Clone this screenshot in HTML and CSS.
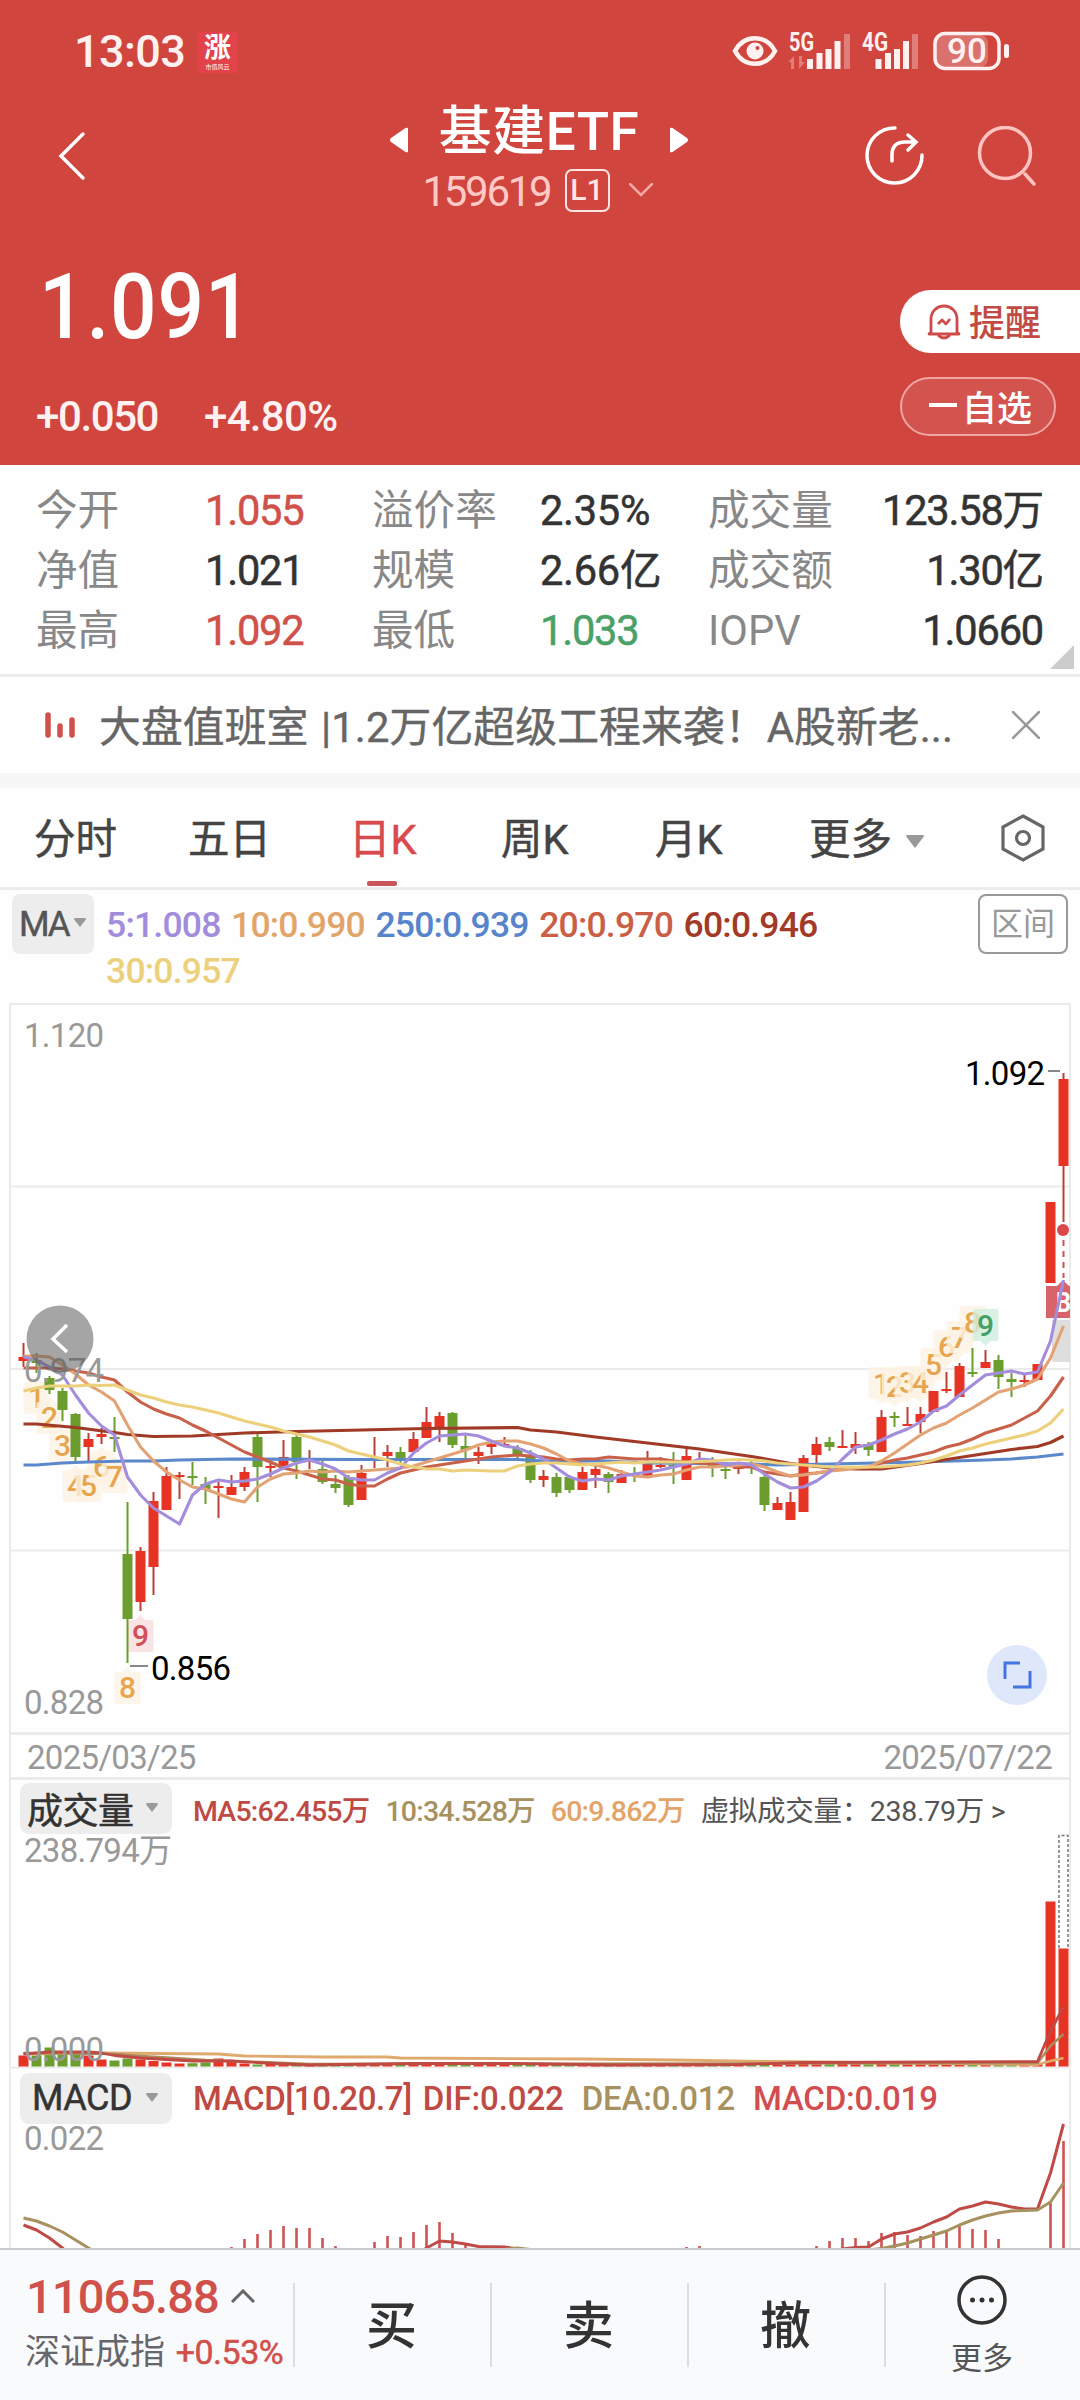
FILE: index.html
```html
<!DOCTYPE html>
<html lang="zh-CN">
<head>
  <meta charset="UTF-8">
  <meta name="viewport" content="width=device-width, initial-scale=1.0">
  <title>基建ETF 159619</title>
  <link rel="stylesheet" href="styles.css">
</head>

<body>

  <header>
    <div class="status">
      <span class="time">13:03</span>
      <span class="app-badge"><b>涨</b><i>市值风云</i></span>
      <div class="status-icons">
        <svg width="46" height="32" viewBox="0 0 46 32">
          <path d="M3 16C12-1 34-1 43 16C34 33 12 33 3 16Z" fill="none" stroke="#fff1f0" stroke-width="4.5"/>
          <circle cx="23" cy="16" r="8.5" fill="#fff1f0"/>
          <circle cx="25.500" cy="13" r="2" fill="#d0453e"/>
        </svg>
        <svg class="signal" width="64" height="40" viewBox="0 0 64 40">
          <text x="1" y="20" textLength="25" lengthAdjust="spacingAndGlyphs">5G</text>
          <path class="dim" d="M0 31l6-6v13H3v-7zM17 31l-6 7V25h3v6zM56 3h6v35h-6z"/>
          <path d="M19 28h6v10h-6zM28.500 22h6v16h-6zM37.500 18h6v20h-6zM46.500 10h6v28h-6z"/>
        </svg>
        <svg class="signal" width="58" height="40" viewBox="0 0 58 40">
          <text x="0" y="20" textLength="26" lengthAdjust="spacingAndGlyphs">4G</text>
          <path class="dim" d="M50 3h6v35h-6z"/>
          <path d="M13.500 28h6v10h-6zM23 22h6v16h-6zM32 18h6v20h-6zM41 10h6v28h-6z"/>
        </svg>
        <svg class="battery" width="77" height="40" viewBox="0 0 77 40">
          <rect x="3" y="4" width="52" height="32" rx="8" fill="#db716c"/>
          <rect x="2" y="2.500" width="64" height="35" rx="10" fill="none" stroke="#fff1f0" stroke-width="3.500"/>
          <rect x="71" y="13" width="5" height="14" rx="2.500" fill="#fff1f0"/>
          <text x="14" y="32" textLength="40">90</text>
        </svg>
      </div>
    </div>

    <nav>
      <svg class="back" width="30" height="52" viewBox="0 0 30 52">
        <path d="M26 4L4 26L26 48"/>
      </svg>
      <div class="title">
        <div class="title-row">
          <svg width="18" height="26" viewBox="0 0 18 26"><path d="M18 1v24Q16 26 14 24L1 15Q-1 13 1 11L14 2Q16 0 18 1Z"/></svg>
          <h1>基建ETF</h1>
          <svg width="18" height="26" viewBox="0 0 18 26"><path d="M0 1v24Q2 26 4 24L17 15Q19 13 17 11L4 2Q2 0 0 1Z"/></svg>
        </div>
        <div class="code-row">
          <span>159619</span>
          <em>L1</em>
          <svg width="24" height="14" viewBox="0 0 24 14"><path d="M1 1l11 11L23 1"/></svg>
        </div>
      </div>
      <div class="nav-right">
        <svg width="60" height="60" viewBox="0 0 60 60">
          <path d="M31 2A27.500 27.500 0 1 0 58 29" />
          <path d="M28 35V29Q28 16 41 16H52M44 9l8 7l-8 8"/>
        </svg>
        <svg class="search" width="60" height="60" viewBox="0 0 60 60">
          <circle cx="28" cy="27" r="25.500"/>
          <path d="M48 48l9 10"/>
        </svg>
      </div>
    </nav>

    <div class="quote">
      <div>
        <div class="price">1.091</div>
        <div class="change"><span>+0.050</span><span>+4.80%</span></div>
      </div>
      <div class="quote-buttons">
        <button class="remind">
          <svg width="34" height="36" viewBox="0 0 34 36">
            <path d="M4 28V15A13 13 0 0 1 30 15V28L32 30H2ZM11 31Q17 37 23 31M11 20l4-4l4 4l4-5"/>
          </svg>提醒
        </button>
        <button class="fav"><i></i>自选</button>
      </div>
    </div>
  </header>

  <section class="stats">
    <span>今开</span><b class="up">1.055</b><span>溢价率</span><b class="wide">2.35%</b><span>成交量</span><b>123.58万</b>
    <span>净值</span><b>1.021</b><span>规模</span><b class="wide">2.66亿</b><span>成交额</span><b>1.30亿</b>
    <span>最高</span><b class="up">1.092</b><span>最低</span><b class="down">1.033</b><span>IOPV</span><b>1.0660</b>
  </section>

  <section class="news">
    <svg width="32" height="26" viewBox="0 0 32 26"><path d="M4 3v20M16 14v9M28 8v15"/></svg>
    <p>大盘值班室 |1.2万亿超级工程来袭！A股新老...</p>
    <svg class="close" width="28" height="28" viewBox="0 0 28 28"><path d="M1 1l26 26M27 1L1 27"/></svg>
  </section>

  <section class="tabs">
    <a>分时</a>
    <a>五日</a>
    <a class="active">日K</a>
    <a>周K</a>
    <a>月K</a>
    <a>更多<i class="caret"></i></a>
    <svg width="44" height="48" viewBox="0 0 44 48">
      <path d="M22 2L42 13V35L22 46L2 35V13Z"/>
      <circle cx="22" cy="24" r="6.500"/>
    </svg>
  </section>

  <section class="ma">
    <span class="ma-badge">MA<i class="caret"></i></span>
    <div class="ma-list">
      <span class="c5">5:1.008</span>
      <span class="c10">10:0.990</span>
      <span class="c250">250:0.939</span>
      <span class="c20">20:0.970</span>
      <span class="c60">60:0.946</span>
      <span class="c30">30:0.957</span>
    </div>
    <span class="range">区间</span>
  </section>

  <svg id="kline" width="1080" height="729" viewBox="0 1003 1080 729"></svg>

  <div class="dates"><span>2025/03/25</span><span>2025/07/22</span></div>

  <section class="panel">
    <div class="panel-head volume-head">
      <span class="panel-badge">成交量<i class="caret"></i></span>
      <span class="dif">MA5:62.455万</span>
      <span class="dea">10:34.528万</span>
      <span class="c10">60:9.862万</span>
      <span class="virtual">虚拟成交量：238.79万 &gt;</span>
    </div>
    <svg id="volume" width="1080" height="234" viewBox="0 1835 1080 234"></svg>
  </section>

  <section class="panel">
    <div class="panel-head macd-head">
      <span class="panel-badge">MACD<i class="caret"></i></span>
      <span class="dif">MACD[10.20.7]</span>
      <span class="dif">DIF:0.022</span>
      <span class="dea">DEA:0.012</span>
      <span class="hist">MACD:0.019</span>
    </div>
    <svg id="macd" width="1080" height="125" viewBox="0 2123 1080 125"></svg>
  </section>

  <footer>
    <div class="index">
      <div class="index-value">11065.88<svg width="24" height="14" viewBox="0 0 24 14"><path d="M1 13L12 2l11 11"/></svg></div>
      <div class="index-name">深证成指 <b>+0.53%</b></div>
    </div>
    <a>买</a>
    <a>卖</a>
    <a>撤</a>
    <a class="more">
      <svg width="50" height="50" viewBox="0 0 50 50">
        <circle cx="25" cy="25" r="23" fill="none" stroke="#333" stroke-width="3.500"/>
        <circle cx="15.500" cy="25" r="2.500"/><circle cx="25" cy="25" r="2.500"/><circle cx="34.500" cy="25" r="2.500"/>
      </svg>
      更多
    </a>
  </footer>

  <script src="chart.js"></script>
</body>
</html>
```
FILE: styles.css
```css
* {
  box-sizing: border-box;
}

body {
  margin: 0;
  width: 1080px;
  height: 2400px;
  overflow: hidden;
  background-color: #fefefe;
  color: #333;
  font-family: Roboto, "Noto Sans CJK SC", sans-serif;
}

svg {
  display: block;
  flex: none;
}

i, em {
  font-style: normal;
}

/* header */
header {
  height: 465px;
  background-color: #d0453e;
  color: white;
}

.status {
  display: flex;
  align-items: center;
  height: 102px;
  padding: 0 70px 0 74px;
}

.time {
  width: 123px;
  font-size: 45px;
  font-weight: 500;
  letter-spacing: -0.6px;
  color: #fff1f0;
}

.app-badge {
  width: 41px;
  height: 41px;
  margin-top: 2px;
  background-color: #e2434a;
  text-align: center;
}

.app-badge b {
  display: block;
  font-size: 27px;
  line-height: 32px;
}

.app-badge i {
  display: block;
  font-size: 6px;
  line-height: 6px;
}

.status-icons {
  display: flex;
  align-items: center;
  margin-left: auto;
}

.status-icons svg:first-child {
  margin-right: 10px;
}

.signal {
  overflow: visible;
  margin-right: 10px;
  fill: #fff1f0;
}

.signal + .signal {
  margin-right: 13px;
}

.signal .dim {
  fill: #e07f7a;
}

.signal text {
  font-size: 25px;
  font-weight: 700;
}

.battery text {
  font-size: 35px;
  font-weight: 500;
  fill: #fff1f0;
}

nav {
  display: flex;
  height: 118px;
  padding-left: 57px;
}

nav path, nav circle {
  fill: none;
  stroke: white;
  stroke-width: 3.5;
  stroke-linecap: round;
}

.back {
  margin-top: 28px;
}

.title {
  width: 300px;
  margin-left: 302px;
}

.title-row {
  display: flex;
  align-items: center;
  justify-content: center;
  gap: 31px;
  height: 58px;
}

.title-row svg {
  margin-top: 17px;
}

.title-row path {
  fill: white;
  stroke: none;
}

h1 {
  margin: 2px 0 0;
  font-size: 53px;
  font-weight: 500;
  line-height: 58px;
  letter-spacing: 0.5px;
  white-space: nowrap;
}

.code-row {
  display: flex;
  align-items: center;
  justify-content: center;
  height: 60px;
  margin-left: -3px;
  color: #ffc9c6;
  font-size: 42px;
}

.code-row span {
  width: 142px;
  padding-top: 2px;
  letter-spacing: -2.3px;
}

.code-row em {
  width: 45px;
  height: 43px;
  margin-right: 19px;
  border: 2.5px solid #ffe4e2;
  border-radius: 7px;
  font-size: 30px;
  font-weight: 500;
  line-height: 38px;
  text-align: center;
  color: #ffe4e2;
}

.code-row path {
  stroke: #f3a9a5;
  stroke-width: 2.5;
}

.nav-right {
  display: flex;
  gap: 53px;
  margin-left: auto;
  padding: 24px 43px 0 0;
}

.search circle, .search path {
  stroke: #ffc4c1;
}

.quote {
  display: flex;
  justify-content: space-between;
}

.price {
  height: 120px;
  margin: 24px 0 0 39px;
  font-size: 91px;
  font-weight: 500;
  line-height: 126px;
  letter-spacing: 1px;
  transform: scaleX(0.9);
  transform-origin: left;
}

.change {
  display: flex;
  gap: 46px;
  margin-left: 36px;
  padding-top: 26px;
  font-size: 42px;
  font-weight: 500;
  line-height: 54px;
  letter-spacing: -1.4px;
  color: #fff1f0;
}

.change span + span {
  letter-spacing: -0.7px;
}

.quote-buttons {
  width: 180px;
  padding-top: 70px;
}

button {
  display: flex;
  align-items: center;
  border: 0;
  padding: 0 0 0 27px;
  font-family: inherit;
  font-size: 36px;
}

.remind {
  width: 180px;
  height: 63px;
  padding-bottom: 4px;
  border-radius: 31px 0 0 31px;
  background-color: white;
  color: #c24a44;
  font-weight: 500;
  gap: 8px;
}

.remind svg {
  margin-top: 4px;
}

.remind path {
  fill: none;
  stroke: #cf4b4a;
  stroke-width: 2.8;
  stroke-linejoin: round;
}

.fav {
  width: 156px;
  height: 59px;
  margin-top: 24px;
  padding-bottom: 3px;
  border: 2px solid #f0a6a2;
  border-radius: 30px;
  background-color: #d3544f;
  color: white;
  font-weight: 500;
  font-size: 35px;
}

.fav i {
  width: 28px;
  height: 4px;
  margin-right: 5px;
  background-color: white;
}

/* key figures */
.stats {
  position: relative;
  display: grid;
  grid-template-columns: 169px 167px 168px 168px 1fr auto;
  grid-auto-rows: 60px;
  height: 212px;
  padding: 16px 37px 0 36px;
  border-bottom: 3px solid #ececec;
  font-size: 41.6px;
  line-height: 60px;
}

.stats::after {
  content: "";
  position: absolute;
  right: 6px;
  bottom: 5px;
  border-left: 24px solid transparent;
  border-bottom: 24px solid #ccc;
}

.stats span {
  color: #888;
}

.stats b {
  font-weight: 400;
  letter-spacing: -1.2px;
  -webkit-text-stroke: 0.5px;
}

.stats .wide {
  letter-spacing: -0.3px;
}

.stats b:nth-child(6n) {
  text-align: right;
}

.stats .up {
  color: #d0504a;
}

.stats .down {
  color: #4aa168;
}

.news {
  display: flex;
  align-items: center;
  height: 96px;
  padding: 0 40px 0 44px;
}

.news p {
  margin: -2px auto 0 23px;
  color: #666;
  font-size: 41.8px;
  letter-spacing: 0.1px;
  word-spacing: 2px;
  -webkit-text-stroke: 0.4px;
}

.news path {
  stroke: #d0504a;
  stroke-width: 5.5;
  stroke-linecap: round;
}

.news .close path {
  stroke: #999;
  stroke-width: 2.5;
}

.tabs {
  display: flex;
  align-items: center;
  height: 117px;
  padding-left: 34px;
  border-top: 15px solid #f7f7f7;
  border-bottom: 3px solid #ececec;
  font-size: 41.5px;
  color: #444;
}

.tabs a {
  position: relative;
  top: -2px;
  width: 154px;
  white-space: nowrap;
  -webkit-text-stroke: 0.5px;
}

.tabs a:nth-child(3) { left: -3px; }
.tabs a:nth-child(2) { width: 164px; }
.tabs a:nth-child(3) { width: 149px; }
.tabs a:nth-child(6) { width: 192px; }

.tabs .active {
  color: #d84a4e;
}

.tabs .active::after {
  content: "";
  position: absolute;
  left: 18px;
  bottom: -20px;
  width: 30px;
  height: 5px;
  border-radius: 2px;
  background-color: #c9555a;
}

.tabs circle, .tabs path {
  fill: none;
  stroke: #666;
  stroke-width: 3.2;
}

.caret {
  display: inline-block;
  border: 10px solid transparent;
  border-top: 13px solid #999;
  border-bottom: 0;
  border-radius: 3px;
  margin-left: 13px;
  vertical-align: 6px;
}

/* moving averages */
.ma {
  display: flex;
  height: 113px;
  padding: 4px 12px 0 12px;
}

.ma-badge {
  width: 82px;
  height: 60px;
  padding-left: 7px;
  border-radius: 8px;
  background-color: #ededed;
  color: #555;
  font-size: 35px;
  line-height: 62px;
  letter-spacing: -2px;
  white-space: nowrap;
  -webkit-text-stroke: 0.5px;
}

.ma .caret {
  border-width: 9px 7px 0;
  margin-left: 4px;
  vertical-align: 9px;
}

.ma-list {
  display: flex;
  flex-wrap: wrap;
  column-gap: 10.5px;
  width: 730px;
  height: 92px;
  margin: 8px auto 0 12px;
  font-size: 35.5px;
  font-weight: 500;
  line-height: 46px;
  letter-spacing: -0.8px;
}

.c5 { color: #a28cdc; }
.c10 { color: #e3a469; }
.c250 { color: #5784cb; }
.c20 { color: #cb5f45; }
.c60 { color: #a23a27; }
.c30 { color: #ecd07c; }

.range {
  width: 90px;
  height: 60px;
  border: 2.5px solid #999;
  border-radius: 8px;
  color: #999;
  font-size: 32px;
  line-height: 56px;
  text-align: center;
}

/* charts */
.grid {
  stroke: #ebebeb;
  stroke-width: 2;
  fill: none;
}

.axis {
  font-size: 33px;
  fill: #999;
}

.mark {
  font-size: 33px;
  fill: #000;
}

.flag {
  font-size: 30px;
  font-weight: 500;
  text-anchor: middle;
}

.dates {
  display: flex;
  justify-content: space-between;
  height: 48px;
  margin: 0 9px;
  padding: 0 17px 0 16px;
  border: 2px solid #ebebeb;
  border-top-width: 3px;
  border-bottom-width: 3px;
  color: #999;
  font-size: 33px;
  line-height: 45px;
  letter-spacing: -0.7px;
}

#volume, #macd {
  overflow: visible;
}

.panel-head {
  display: flex;
  align-items: center;
  height: 55px;
  margin: 0 9px;
  padding: 2px 0 0 9px;
  border: solid #ebebeb;
  border-width: 0 2px;
  font-weight: 500;
}

.panel-badge {
  display: flex;
  align-items: center;
  justify-content: space-between;
  width: 152px;
  height: 51px;
  margin-right: 21px;
  padding: 0 13px 2px 7px;
  border-radius: 9px;
  background-color: #ededed;
  color: #333;
  font-size: 36px;
  font-weight: 400;
  letter-spacing: -0.5px;
  -webkit-text-stroke: 0.5px;
}

.panel-badge .caret {
  margin: 0;
  border-width: 9px 7px 0;
}

.volume-head {
  font-size: 28.5px;
  letter-spacing: -0.8px;
}

.volume-head > span + span {
  margin-right: 16px;
}

.volume-head .virtual {
  margin: 0;
  font-weight: 400;
  letter-spacing: -0.3px;
  color: #555;
  white-space: nowrap;
}

.macd-head {
  height: 54px;
  padding-top: 5px;
  font-size: 33px;
  letter-spacing: -0.4px;
}

.macd-head .panel-badge {
  padding-left: 12px;
}

.macd-head .dif {
  margin-right: 11px;
}

.macd-head .dif + .dif,
.macd-head .dea {
  margin-right: 18px;
}

.macd-head .dif + .dif {
  letter-spacing: -0.1px;
}

.macd-head .dea,
.macd-head .hist {
  letter-spacing: -0.2px;
}

.dif { color: #bf4a44; }
.dea { color: #a6915f; }
.hist { color: #d24d50; }

/* bottom bar */
footer {
  position: relative;
  display: flex;
  height: 152px;
  border-top: 2px solid #ccc;
  background-color: #f9fafc;
}

.index {
  width: 293px;
  padding: 17px 0 0 26px;
  white-space: nowrap;
}

.index-value {
  display: flex;
  align-items: center;
  height: 58px;
  font-size: 47px;
  font-weight: 500;
  letter-spacing: -0.9px;
  color: #d0504a;
}

.index-value svg {
  margin-left: 12px;
}

.index-value path {
  fill: none;
  stroke: #666;
  stroke-width: 3;
}

.index-name {
  height: 50px;
  margin-left: -1px;
  padding-top: 2px;
  font-size: 35px;
  line-height: 50px;
  color: #66666c;
}

.index-name b {
  margin-left: 2px;
  font-size: 34px;
  font-weight: 400;
  letter-spacing: -0.5px;
  color: #d0504a;
  -webkit-text-stroke: 0.5px;
}

footer a {
  position: relative;
  width: 197px;
  font-size: 51px;
  font-weight: 500;
  line-height: 154px;
  text-align: center;
}

footer a::before {
  content: "";
  position: absolute;
  left: 0;
  top: 33px;
  height: 84px;
  border-left: 2px solid #dcdde1;
}

footer .more {
  width: 196px;
  font-size: 31px;
  font-weight: 400;
  line-height: 60px;
  color: #555;
}

.more svg {
  margin: 25px auto 4px;
  fill: #333;
}
```
FILE: chart.js
```javascript
const RED = "#e73323";
const GREEN = "#6b9e2f";
const x = i => 23.5 + 13 * i;

// direction, high, body top, body bottom, low
const candles = [
  ["r", 1343, 1357, 1361, 1367], ["g", 1353, 1360, 1363, 1373], ["g", 1376, 1378, 1390, 1394],
  ["g", 1388, 1391, 1410, 1421], ["g", 1413, 1414, 1457, 1461], ["r", 1433, 1439, 1447, 1461],
  ["r", 1428, 1434, 1437, 1444], ["g", 1417, 1437, 1439, 1452], ["g", 1502, 1554, 1619, 1663],
  ["r", 1547, 1551, 1602, 1611], ["r", 1492, 1501, 1567, 1595], ["r", 1467, 1476, 1510, 1510],
  ["r", 1472, 1475, 1477, 1499], ["g", 1462, 1476, 1478, 1485], ["g", 1477, 1484, 1489, 1504],
  ["r", 1482, 1486, 1488, 1518], ["r", 1475, 1487, 1495, 1495], ["r", 1467, 1472, 1487, 1491],
  ["g", 1434, 1437, 1467, 1502], ["r", 1462, 1466, 1468, 1477], ["r", 1440, 1457, 1467, 1468],
  ["g", 1435, 1437, 1462, 1479], ["r", 1450, 1460, 1462, 1469], ["g", 1461, 1469, 1482, 1484],
  ["g", 1475, 1484, 1488, 1493], ["g", 1475, 1477, 1505, 1507], ["r", 1465, 1473, 1500, 1500],
  ["r", 1437, 1458, 1460, 1468], ["r", 1445, 1452, 1456, 1467], ["g", 1447, 1452, 1459, 1463],
  ["r", 1432, 1439, 1452, 1452], ["r", 1407, 1422, 1438, 1438], ["r", 1412, 1416, 1427, 1442],
  ["g", 1412, 1413, 1445, 1448], ["g", 1435, 1446, 1450, 1458], ["r", 1447, 1452, 1456, 1464],
  ["r", 1443, 1444, 1447, 1454], ["r", 1437, 1444, 1446, 1446], ["g", 1445, 1448, 1454, 1461],
  ["g", 1450, 1457, 1480, 1483], ["r", 1470, 1476, 1480, 1487], ["g", 1473, 1477, 1493, 1497],
  ["g", 1475, 1477, 1490, 1493], ["r", 1467, 1472, 1490, 1490], ["r", 1465, 1469, 1475, 1488],
  ["g", 1472, 1474, 1482, 1493], ["r", 1470, 1474, 1483, 1483], ["g", 1467, 1474, 1476, 1482],
  ["r", 1451, 1464, 1476, 1478], ["r", 1457, 1465, 1467, 1468], ["g", 1452, 1465, 1467, 1484],
  ["r", 1449, 1456, 1480, 1480], ["r", 1452, 1459, 1461, 1462], ["g", 1457, 1465, 1467, 1477],
  ["g", 1463, 1469, 1471, 1479], ["r", 1463, 1467, 1469, 1474], ["g", 1461, 1465, 1467, 1474],
  ["g", 1475, 1477, 1505, 1511], ["r", 1497, 1503, 1510, 1510], ["r", 1492, 1502, 1520, 1520],
  ["r", 1455, 1458, 1512, 1512], ["r", 1437, 1444, 1455, 1463], ["g", 1437, 1442, 1447, 1451],
  ["r", 1430, 1446, 1448, 1448], ["r", 1432, 1444, 1448, 1454], ["g", 1442, 1444, 1450, 1456],
  ["r", 1410, 1417, 1452, 1452], ["g", 1412, 1416, 1418, 1427], ["r", 1407, 1424, 1426, 1426],
  ["r", 1407, 1414, 1422, 1433], ["r", 1391, 1391, 1412, 1412], ["r", 1372, 1389, 1391, 1393],
  ["r", 1363, 1366, 1397, 1397], ["g", 1348, 1372, 1374, 1377], ["r", 1350, 1362, 1368, 1368],
  ["g", 1355, 1360, 1377, 1389], ["g", 1373, 1379, 1382, 1397], ["r", 1375, 1380, 1382, 1387],
  ["r", 1364, 1364, 1380, 1380], ["r", 1202, 1202, 1283, 1283], ["r", 1073, 1079, 1166, 1222]
];

// a plain number is the next bar's value, a pair is [bar, value]
const ma250 = [[0, 1465], [1, 1465], [3, 1463], [5, 1462], [8, 1461], [10, 1461], [12, 1460], [16, 1459], [26, 1459.5],
  [38, 1459.5], [40, 1461], [45, 1461], [48, 1463], [56, 1464], [58, 1465], [62, 1464], [69, 1462], [74, 1460],
  [76, 1459], [78, 1457], [80, 1454]];
const ma60 = [[0, 1424], [1, 1424], [4, 1427.5], [7, 1432.5], [8, 1434.5], [10, 1436.5], [13, 1436], [17, 1433],
  [21, 1431.5], [26, 1430], [31, 1428.5], [38, 1427.5], [39, 1430], [41, 1432], [44, 1437], [47, 1441.5],
  [52, 1449], [56, 1456.5], [59, 1463.5], [62, 1468], [64, 1469], [66, 1469], [69, 1463.5], [72, 1457.5],
  [76, 1449.5], [78, 1446.5], [79, 1442.5], [80, 1436]];
const ma30 = [1391, 1388, 1386, 1386, 1386, 1385, 1385.5, 1385, 1390, 1395, 1398, 1402, 1405, 1407, 1410, 1413, 1417,
  1421, 1424, 1427, 1431, 1434, 1437, 1441, 1445, 1451, 1454, 1457, 1460, 1464, 1467, 1469, 1469, 1471, 1470, 1470.5,
  1471, 1471, 1466, 1464, 1463, 1463, 1464, 1465, 1464, 1463, 1462, 1463, 1462, 1462, 1462, 1462, 1461.5, 1461, 1460,
  1459.5, 1460, 1461, 1463, 1464, 1465, 1466, 1467, 1467, 1467, 1467, 1467, 1466, 1465, 1463, 1460, 1456, 1451, 1448,
  1444, 1441, 1438, 1435, 1431, 1423, 1409];
const ma20 = [1368, 1368, 1368, 1369, 1371, 1373, 1377, 1380, 1392, 1402, 1409, 1414, 1418, 1425, 1431, 1438, 1445,
  1452, 1457, 1462, 1468, 1471, 1475, 1479, 1480, 1484, 1486, 1486, 1479, 1473, 1470, 1467, 1465, 1463, 1461, 1459,
  1457, 1456, 1455, 1456, 1457, 1459, 1460, 1459, 1459, 1457, 1458, 1459, 1459, 1459, 1461, 1462, 1463, 1464, 1465,
  1467, 1467, 1472, 1474, 1476, 1474, 1473, 1471, 1469, 1468, 1467, 1463, 1460, 1458, 1455, 1452, 1447, 1444, 1439,
  1433, 1429, 1425, 1418, 1411, 1396, 1377];
const ma10 = [1356, 1356, 1357, 1365, 1374, 1385, 1392, 1401, 1425, 1447, 1461, 1472, 1480, 1487, 1489, 1494, 1499,
  1502, 1487, 1479, 1474, 1473, 1471, 1472, 1471, 1472, 1471, 1470, 1469, 1468, 1466, 1462, 1458, 1454, 1450, 1445,
  1442, 1441, 1441, 1444, 1448, 1454, 1461, 1464, 1465, 1468, 1472, 1476, 1477, 1475, 1474, 1470, 1467, 1467, 1466,
  1465, 1464, 1467, 1472, 1476, 1475, 1473, 1471, 1470, 1468, 1467, 1461, 1453, 1444, 1435, 1428, 1423, 1415, 1408,
  1400, 1392, 1389, 1385, 1379, 1358, 1326];
const ma5 = [1357, 1360, 1367, 1375, 1395, 1413, 1426, 1435, 1477, 1495, 1508, 1516, 1524, 1495, 1484, 1480, 1482,
  1481, 1479, 1474, 1468, 1463, 1460, 1464, 1469, 1478, 1480, 1480, 1473, 1468, 1453, 1443, 1436, 1435, 1434, 1436,
  1441, 1446, 1448, 1453, 1459, 1468, 1477, 1481, 1479, 1480, 1476, 1474, 1472, 1470, 1467, 1464, 1459, 1460, 1465,
  1463, 1465, 1474, 1482, 1488, 1487, 1481, 1472, 1459, 1447, 1445, 1440, 1434, 1429, 1422, 1411, 1406, 1395, 1385,
  1375, 1373, 1371, 1374, 1372, 1341, 1280];

function line(data, color, width) {
  const pts = data.map((v, i) => Array.isArray(v) ? `${x(v[0])},${v[1]}` : `${x(i)},${v}`);
  return `<polyline points="${pts.join(" ")}" fill="none" stroke="${color}" stroke-width="${width}" stroke-linejoin="round"/>`;
}

// label, bar, text baseline
const lowFlags = [[1, 1, 1408], [2, 2, 1428], [3, 3, 1456], [4, 4, 1496], [5, 5, 1496], [6, 6, 1477], [7, 7, 1487], [8, 8, 1698], [9, 9, 1646]];
const highFlags = [[1, 66, 1394], [2, 67, 1397], [3, 68, 1393], [4, 69, 1393], [5, 70, 1375], [6, 71, 1357], [7, 72, 1348], [8, 73, 1333], [9, 74, 1336]];

function flag([n, i, y], below) {
  const cx = x(i);
  let fill = "#fdf2e3", color = "#e6a54e";
  if (n === 9) {
    fill = below ? "#f9dcde" : "#d0eedd";
    color = below ? "#cf5058" : "#45a063";
  }
  const tip = below ? `M${cx - 5} ${y - 26}l5-5l5 5z` : `M${cx - 5} ${y + 5}l5 5l5-5z`;
  const top = below ? y - 26 : y - 27;
  return `<g fill="${fill}" fill-opacity=".8"><rect x="${cx - 13}" y="${top}" width="26" height="32" rx="2"/><path d="${tip}"/></g>
    <text class="flag" x="${cx}" y="${y}" fill="${color}">${n}</text>`;
}

let k = `<path class="grid" d="M10 1732V1004H1070V1732M10 1186.500H1070M10 1369H1070M10 1550.500H1070"/>
  <rect x="1052" y="1320" width="18" height="42" fill="#dedede"/>`;
k += lowFlags.map(f => flag(f, true)).join("");
k += highFlags.map(f => flag(f, false)).join("");
candles.forEach(([dir, high, top, bottom, low], i) => {
  const c = dir === "r" ? RED : GREEN;
  const wick = dir === "r" ? "#b8403a" : c;
  k += `<path d="M${x(i)} ${high}V${low}" stroke="${wick}" stroke-width="2"/>
    <rect x="${x(i) - 5}" y="${top}" width="10" height="${Math.max(bottom - top, 1.5)}" fill="${c}"/>`;
});
k += `<path d="M1046 1286h11l6-6l6 6h1v32h-24z" fill="#d9636b"/>
  <text x="1056" y="1312" font-size="28" font-weight="700" fill="#fff" textLength="15" lengthAdjust="spacingAndGlyphs">B</text>
  <circle cx="1063" cy="1230" r="6" fill="#dc464d"/>
  <path d="M1063.500 1240V1278" stroke="#c9555a" stroke-width="2" stroke-dasharray="6 5"/>`;
k += line(ma250, "#5b88cb", 3.2) + line(ma60, "#a03a26", 3.2) + line(ma20, "#c9604a", 3.1)
  + line(ma10, "#e3a273", 3.1) + line(ma5, "#a38ddc", 3.1) + line(ma30, "#ecd07c", 3.2);
k += `<text class="axis" x="24" y="1047" textLength="80">1.120</text>
  <text class="axis" x="24" y="1382" textLength="80">0.974</text>
  <text class="axis" x="24" y="1714" textLength="80">0.828</text>
  <text class="mark" x="151" y="1680" textLength="80">0.856</text>
  <text class="mark" x="965" y="1085" textLength="80">1.092</text>
  <path d="M130 1666H148M1048 1071H1060" stroke="#888" stroke-width="2"/>
  <circle cx="60" cy="1339" r="33.500" fill="#555" fill-opacity=".53"/>
  <path d="M67 1325L53 1339L67 1352" fill="none" stroke="#fff" stroke-width="3.500"/>
  <circle cx="1017" cy="1675" r="30" fill="#dfe8fb"/>
  <path d="M1005 1679V1663H1020M1030 1671V1687H1013" fill="none" stroke="#4473e2" stroke-width="3"/>`;
document.getElementById("kline").innerHTML = k;

const volumes = [11, 11, 19, 14, 13, 11, 7, 6, 8, 7, 5.5, 4, 3, 3.3, 4, 8, 5.5, 3, 2, 2.5, 3];
let v = `<path class="grid" d="M10 1835V2067.500H1070V1835"/>`;
candles.forEach(([dir], i) => {
  let h = volumes[i] || (i % 3 ? 2.2 : 3);
  if (i === 79) h = 165;
  if (i === 80) h = 118;
  v += `<rect x="${x(i) - 5}" y="${2066.5 - h}" width="10" height="${h}" fill="${dir === "r" ? RED : GREEN}"/>`;
});
v += `<path d="M1059 1948V1835.500H1068V1948" fill="none" stroke="#777" stroke-width="1.500" stroke-dasharray="3 2"/>`;
v += line([[0, 2054], [6, 2053], [15, 2054], [17, 2056], [23, 2057], [28, 2057], [29, 2058], [43, 2059], [50, 2060],
  [58, 2061.5], [64, 2062.5], [78, 2064.5], [79, 2061], [80, 2058]], "#e0a96d", 2.8);
v += line([[0, 2053], [7, 2054], [9, 2056], [11, 2057.5], [14, 2060], [17, 2061.5], [22, 2064], [78, 2063], [79, 2046], [80, 2034]], "#ab8a5c", 2.5);
v += line([[0, 2054], [2, 2052], [5, 2052], [6, 2053], [7, 2055.5], [9, 2058], [13, 2061], [16, 2061], [18, 2062.5],
  [20, 2064], [22, 2065], [30, 2063.5], [38, 2063.5], [45, 2065], [55, 2064.5], [60, 2062.5], [78, 2061.5], [79, 2031], [80, 2007]], "#bf4a44", 2.8);
v += `<text class="axis" x="24" y="1862" textLength="148">238.794万</text>
  <text class="axis" x="24" y="2061" textLength="80">0.000</text>`;
document.getElementById("volume").innerHTML = v;

const hist = {16: 2247, 17: 2239, 18: 2234, 19: 2230, 20: 2226, 21: 2228, 22: 2228, 23: 2238, 24: 2246,
  27: 2242, 28: 2236, 29: 2237, 30: 2232, 31: 2225, 32: 2222, 33: 2233, 34: 2243, 51: 2247, 52: 2246,
  61: 2246, 62: 2241, 63: 2238, 64: 2238, 65: 2241, 66: 2233, 67: 2232, 68: 2235, 69: 2236, 70: 2231,
  71: 2231, 72: 2226, 73: 2229, 74: 2230, 75: 2239, 79: 2203, 80: 2141};
let m = `<path class="grid" d="M10 2120V2250M1070 2120V2250"/>`;
for (const i in hist) {
  m += `<path d="M${x(+i)} ${hist[i]}V2250" stroke="#cf5355" stroke-width="2.600"/>`;
}
m += line([[0, 2225], [1, 2230], [2, 2238], [3, 2248], [4, 2260], [30, 2258], [31, 2248], [32, 2241], [33, 2242],
  [34, 2244], [35, 2246.5], [37, 2247], [39, 2251], [60, 2256], [63, 2249], [64, 2247.5], [65, 2247], [66, 2239], [67, 2234],
  [68, 2232], [69, 2228], [70, 2222], [71, 2217], [72, 2209], [73, 2206], [74, 2202], [75, 2204], [76, 2207],
  [77, 2209], [78, 2209], [79, 2173], [80, 2124]], "#bf4a46", 3);
m += line([[0, 2218], [1, 2221], [2, 2226], [3, 2232], [4, 2240], [5, 2248], [6, 2256], [36, 2251], [38, 2248], [40, 2251], [60, 2258],
  [66, 2248.5], [67, 2246], [68, 2243], [69, 2239], [70, 2235], [71, 2231], [72, 2225], [73, 2220], [74, 2216],
  [75, 2213], [76, 2211], [77, 2210.5], [78, 2210], [79, 2202], [80, 2183]], "#a6915f", 3);
m += `<text class="axis" x="24" y="2150" textLength="80">0.022</text>`;
document.getElementById("macd").innerHTML = m;
```
